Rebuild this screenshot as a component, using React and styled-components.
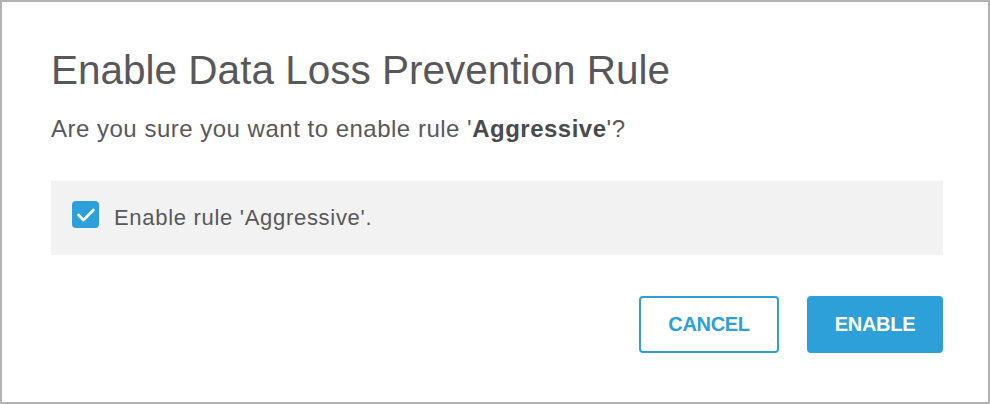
import React, { useState } from "react";
import styled, { createGlobalStyle } from "styled-components";

const GlobalStyle = createGlobalStyle`
    html, body {
        margin: 0;
        padding: 0;
        background: #ffffff;
    }
    body {
        font-family: "Liberation Sans", Arial, Helvetica, sans-serif;
        -webkit-font-smoothing: antialiased;
    }
`;

const Frame = styled.div`
    box-sizing: border-box;
    width: 990px;
    height: 404px;
    border: 2px solid #b2b2b2;
    background: #ffffff;
    padding: 0 45px 0 49px;
    display: flex;
    flex-direction: column;
`;

const Title = styled.h1`
    margin: 45px 0 0;
    font-size: 40.5px;
    line-height: 46px;
    font-weight: 400;
    color: #58585b;
`;

const Question = styled.p`
    margin: 22px 0 0;
    font-size: 24px;
    line-height: 28px;
    letter-spacing: 0.5px;
    color: #58585b;

    strong {
        font-weight: 700;
        color: #4a4a4d;
    }
`;

const OptionPanel = styled.label`
    margin-top: 38px;
    height: 74px;
    box-sizing: border-box;
    background: #f2f2f2;
    display: flex;
    align-items: flex-start;
    padding: 20px 0 0 21px;
    gap: 15px;
    cursor: pointer;
`;

const Box = styled.span`
    width: 27px;
    height: 27px;
    border-radius: 4px;
    background: ${(p) => (p.checked ? "#2d9fd9" : "#ffffff")};
    border: ${(p) => (p.checked ? "none" : "1px solid #b0b0b0")};
    display: flex;
    align-items: center;
    justify-content: center;
    flex-shrink: 0;
`;

const HiddenInput = styled.input`
    display: none;
`;

const OptionText = styled.span`
    margin-top: 3px;
    font-size: 22px;
    line-height: 28px;
    letter-spacing: 0.7px;
    color: #58585b;
`;

const Actions = styled.div`
    margin-top: 41px;
    display: flex;
    justify-content: flex-end;
    gap: 28px;
`;

const Button = styled.button`
    box-sizing: border-box;
    height: 57px;
    width: ${(p) => p.$width}px;
    border-radius: 4px;
    border: 2px solid #2d9fd9;
    background: ${(p) => (p.$primary ? "#2d9fd9" : "#ffffff")};
    color: ${(p) => (p.$primary ? "#ffffff" : "#2d9fd9")};
    font-family: "Liberation Sans", Arial, sans-serif;
    font-size: 20px;
    font-weight: 700;
    letter-spacing: -0.3px;
    cursor: pointer;
`;

const Check = () => (
    <svg width="20" height="16" viewBox="0 0 20 16" fill="none">
        <path d="M2.5 8 L7.5 13 L17.5 3" stroke="#ffffff" strokeWidth="2.6" strokeLinecap="round" strokeLinejoin="round" />
    </svg>
);

const App = () => {
    const [checked, setChecked] = useState(true);

    return (
        <>
            <GlobalStyle />
            <Frame>
                <Title>Enable Data Loss Prevention Rule</Title>
                <Question>
                    Are you sure you want to enable rule '<strong>Aggressive</strong>'?
                </Question>
                <OptionPanel>
                    <HiddenInput type="checkbox" checked={checked} onChange={() => setChecked(!checked)} />
                    <Box checked={checked}>{checked && <Check />}</Box>
                    <OptionText>Enable rule 'Aggressive'.</OptionText>
                </OptionPanel>
                <Actions>
                    <Button $width={140}>CANCEL</Button>
                    <Button $width={136} $primary>ENABLE</Button>
                </Actions>
            </Frame>
        </>
    );
};

export default App;
